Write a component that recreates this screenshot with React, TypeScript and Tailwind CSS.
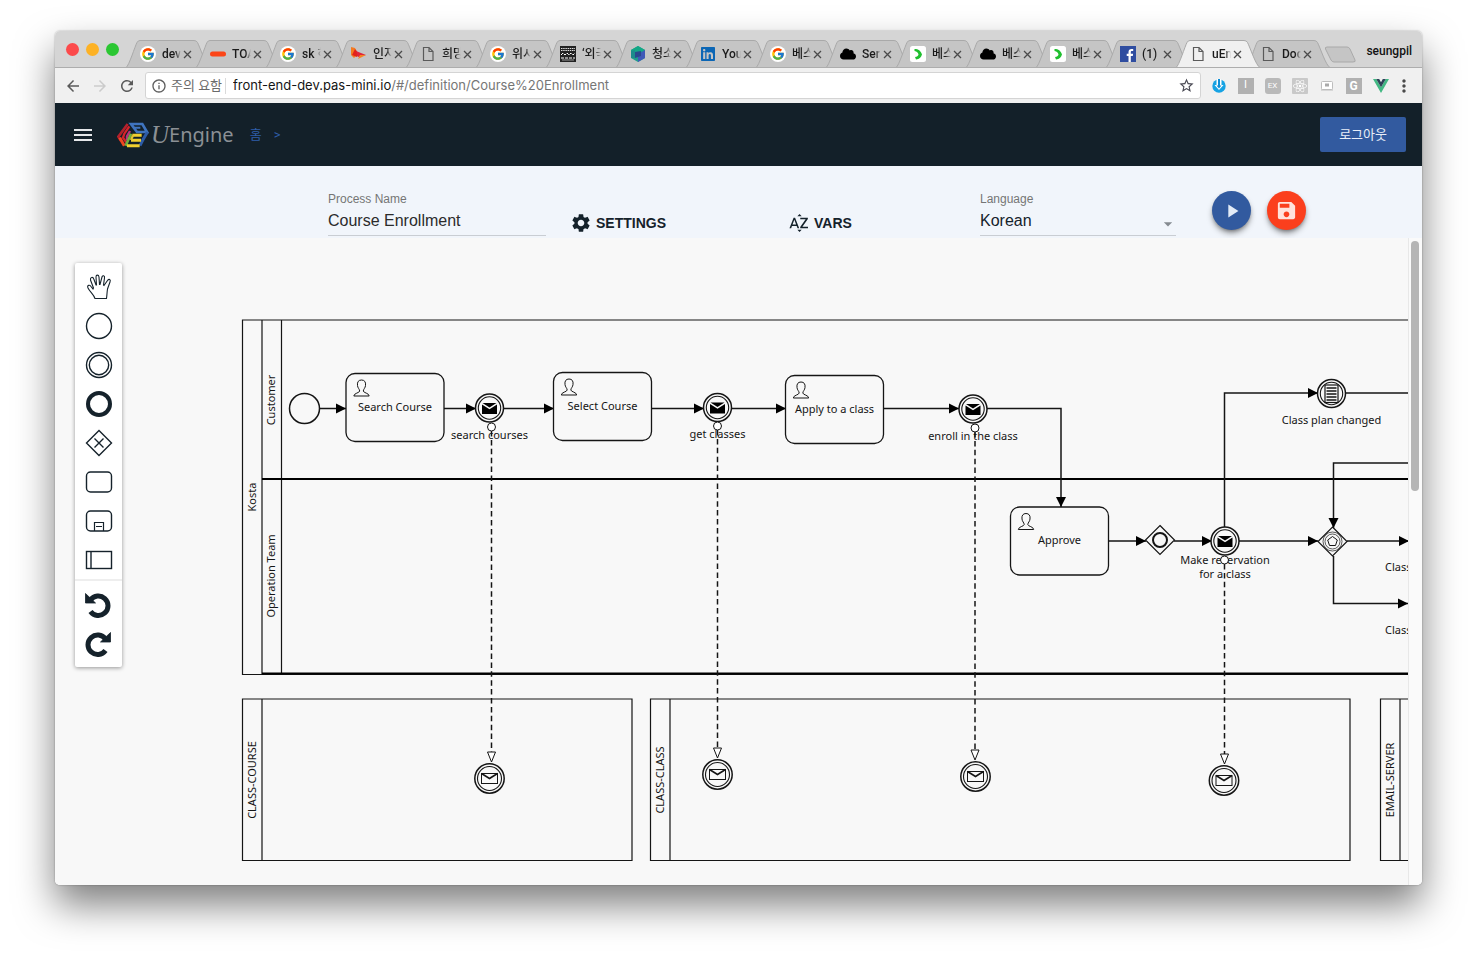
import type { ReactNode } from 'react';
import { FcGoogle } from 'react-icons/fc';
import { FaCloud, FaReact, FaLinkedin } from 'react-icons/fa';
import {
  MdArrowBack,
  MdArrowForward,
  MdArrowDropDown,
  MdInfoOutline,
  MdMenu,
  MdMoreVert,
  MdPlayArrow,
  MdRefresh,
  MdSave,
  MdSettings,
  MdSortByAlpha,
  MdStarBorder,
} from 'react-icons/md';

/* ---------- Browser chrome ---------- */

const GoogleIcon = () => (
  <span className="flex size-4 items-center justify-center rounded-full bg-white">
    <FcGoogle size={14} />
  </span>
);

const PageIcon = () => (
  <svg width="16" height="16" viewBox="0 0 16 16" fill="none" stroke="#5a5a5a" strokeWidth="1.2">
    <path d="M3.500 1.500h5.500l4 4v9H3.500z M9 1.500v4h4" />
  </svg>
);

const ToastIcon = () => (
  <svg width="16" height="16" viewBox="0 0 16 16">
    <rect x="0" y="5.500" width="16" height="5" rx="2.500" fill="#fb4517" />
  </svg>
);

const WingIcon = () => (
  <svg width="17" height="16" viewBox="0 0 17 16">
    <path d="M1 1l4 1 3 6-4 4-3-3z" fill="#f47a20" />
    <path d="M5 3l4 5-2 3-5-2z" fill="#e2231a" />
    <path d="M6 5l10 4-8 2z" fill="#e0253a" />
    <path d="M10 9l6 0-8 4z" fill="#f58220" />
  </svg>
);

const FilmIcon = () => (
  <svg width="16" height="16" viewBox="0 0 16 16">
    <rect width="16" height="16" fill="#222" />
    <path d="M1 2.500h14M1 4.500h14" stroke="#ddd" strokeDasharray="1.500 0.700" />
    <path d="M1 9l2-2 2 2 2-2 2 2 2-2 2 2 2-2M1 12h14" stroke="#fff" strokeDasharray="3 1" fill="none" />
    <path d="M2 14h12" stroke="#999" />
  </svg>
);

const CubeIcon = () => (
  <svg width="16" height="16" viewBox="0 0 16 16">
    <path d="M8 0l7 4v8l-7 4-7-4V4z" fill="#1f9d8b" />
    <path d="M8 0l7 4v4L8 5 1 8V4z" fill="#13a886" />
    <path d="M8 16l7-4V4L8 8z" fill="#4059b8" />
    <path d="M1 5l4-1v8l-4 0z" fill="#1c8c8c" />
    <path d="M5 6l6-1v5l-6 2z" fill="#2a4a8d" />
  </svg>
);

const GreenArrowIcon = () => (
  <svg width="16" height="16" viewBox="0 0 16 16">
    <rect width="16" height="16" rx="2.500" fill="#fff" />
    <path d="M4.500 3c4 0 6 1.500 7.500 5.500-1 3-2.500 4.500-6 5L5 11c2 0 3-1 3.500-2.500C8 6.500 7 5.500 4.500 5z" fill="#1fbf2f" />
  </svg>
);

const FacebookIcon = () => (
  <svg width="16" height="16" viewBox="0 0 16 16">
    <rect width="16" height="16" fill="#2f4da0" />
    <path d="M8.500 16v-6H6.700V7.700h1.800V6c0-2 1.200-3.100 3-3.100.8 0 1.500.1 1.700.1v2.100H12c-1 0-1.200.5-1.200 1.200v1.400h2.300l-.3 2.300h-2V16z" fill="#fff" />
  </svg>
);

const CloudIcon = () => <FaCloud size={16} color="#000" />;
const LinkedinIcon = () => <FaLinkedin size={16} color="#0b66b5" />;

type Tab = { title: string; icon: ReactNode; active?: boolean };

const tabs: Tab[] = [
  { title: 'dev', icon: <GoogleIcon /> },
  { title: 'TOA', icon: <ToastIcon /> },
  { title: 'sk 하', icon: <GoogleIcon /> },
  { title: '인지', icon: <WingIcon /> },
  { title: '희망', icon: <PageIcon /> },
  { title: '위시', icon: <GoogleIcon /> },
  { title: '‘외국', icon: <FilmIcon /> },
  { title: '청소', icon: <CubeIcon /> },
  { title: 'You', icon: <LinkedinIcon /> },
  { title: '베스', icon: <GoogleIcon /> },
  { title: 'Ser', icon: <CloudIcon /> },
  { title: '베스', icon: <GreenArrowIcon /> },
  { title: '베스', icon: <CloudIcon /> },
  { title: '베스', icon: <GreenArrowIcon /> },
  { title: '(1)', icon: <FacebookIcon /> },
  { title: 'uEn', icon: <PageIcon />, active: true },
  { title: 'Doc', icon: <PageIcon /> },
];

function BrowserTab({ title, icon, active }: Tab) {
  return (
    <div className={active ? 'relative z-10 -mr-[14px] h-7 w-[84px] shrink-0' : 'relative -mr-[14px] h-7 w-[84px] shrink-0'}>
      <svg className="absolute inset-0" width="84" height="28" viewBox="0 0 84 28">
        <path
          d="M0 27.500C3 26 9 6 11 2.500Q12 .5 14 .5H68Q70.500 .5 71.500 2.500C74 7 80 26 84 27.500"
          fill={active ? '#f0f0f0' : '#c5c5c5'}
          stroke="#a9a9a9"
        />
        {active && <path d="M1 27.500h82" stroke="#f0f0f0" />}
      </svg>
      <div className="relative flex h-full items-center pl-[14px]">
        {icon}
        <button
          type="button"
          className="ml-[6px] w-[19px] overflow-hidden text-left text-[12px] font-medium whitespace-nowrap text-[#1b1b1b] [mask-image:linear-gradient(to_right,black_70%,transparent)]"
        >
          {title}
        </button>
        <button type="button" aria-label="Close tab" className="ml-[2px]">
          <svg width="9" height="9" viewBox="0 0 9 9" stroke="#4a4a4a" strokeWidth="1.300">
            <path d="M1 1l7 7M8 1l-7 7" />
          </svg>
        </button>
      </div>
    </div>
  );
}

function TabStrip() {
  return (
    <div className="flex h-[37px] items-end overflow-hidden border-b border-[#adadad] bg-[#d5d5d5]">
      <div className="flex h-full w-[71px] shrink-0 items-center gap-[7px] pl-[11px]">
        <span className="size-[13px] rounded-full bg-[#fc4a4b]" />
        <span className="size-[13px] rounded-full bg-[#fdb225]" />
        <span className="size-[13px] rounded-full bg-[#2bc732]" />
      </div>
      <div className="-mb-px flex">
        {tabs.map((tab, i) => (
          <BrowserTab key={i} {...tab} />
        ))}
      </div>
      <button type="button" aria-label="New tab" className="ml-2 self-center">
        <svg width="34" height="18" viewBox="0 0 34 18" className="mt-3">
          <path d="M3 1h20q2 0 3 2l5 11q1 2-2 2H10q-2 0-3-2L1.500 3q-.7-2 1.500-2z" fill="#c5c5c5" stroke="#a9a9a9" />
        </svg>
      </button>
      <span className="ml-auto pr-[10px] pb-[7px] text-[12px] font-medium text-[#111]">seungpil</span>
    </div>
  );
}

const extensions: { name: string; icon: ReactNode }[] = [
  {
    name: 'Downloads',
    icon: (
      <svg width="14" height="14" viewBox="0 0 14 14">
        <circle cx="7" cy="7" r="6.700" fill="#16a3e4" />
        <path d="M4.500 0h5v6h2L7 11 2.500 6h2z" fill="#fff" />
        <path d="M6 0h2v6.500H9.500L7 9.500 4.500 6.500H6z" fill="#0f8fd6" />
      </svg>
    ),
  },
  { name: 'Instapaper', icon: <span className="flex size-4 items-center justify-center bg-[#b1b1b1] text-[11px] text-white">I</span> },
  { name: 'EX', icon: <span className="flex size-4 items-center justify-center rounded-[3px] bg-[#b9b9b9] text-[8px] text-white">EX</span> },
  { name: 'React', icon: <span className="flex size-4 items-center justify-center rounded-[1px] bg-[#c9c9c9] text-white"><FaReact size={14} /></span> },
  {
    name: 'Screen',
    icon: (
      <svg width="14" height="12" viewBox="0 0 14 12">
        <rect x="1.500" y="1.500" width="11" height="8" rx="1" fill="#fff" stroke="#bdbdbd" />
        <rect x="5" y="3.500" width="4" height="3" fill="#aaa" />
        <path d="M1 10h12" stroke="#bdbdbd" />
      </svg>
    ),
  },
  { name: 'G', icon: <span className="flex size-4 items-center justify-center bg-[#b1b1b1] text-[12px] font-bold text-white">G</span> },
  {
    name: 'Vue',
    icon: (
      <svg width="16" height="14" viewBox="0 0 16 14">
        <path d="M0 0h3.200L8 8.300 12.800 0H16L8 14z" fill="#42b883" />
        <path d="M3.200 0H6.200L8 3.200 9.800 0h3L8 8.300z" fill="#2f4358" />
      </svg>
    ),
  },
];

function AddressBar() {
  return (
    <div className="flex h-[35px] items-center bg-[#f0f0f0] pl-[9px]">
      <button type="button" aria-label="Back" className="w-[27px] text-[#5a5a5a]"><MdArrowBack size={18} /></button>
      <button type="button" aria-label="Forward" className="w-[27px] text-[#cbcbcb]"><MdArrowForward size={18} /></button>
      <button type="button" aria-label="Reload" className="w-[27px] text-[#5a5a5a]"><MdRefresh size={18} /></button>
      <div className="flex h-[27px] min-w-0 flex-1 items-center rounded-[3px] border border-[#d4d4d4] bg-white pr-[5px] pl-[5px]">
        <MdInfoOutline size={16} color="#5f5f5f" />
        <span className="ml-1 w-[54px] text-[13px] whitespace-nowrap text-[#6a6a6a]">주의 요함</span>
        <span className="mr-[7px] h-4 border-r border-[#dadada]" />
        <div role="textbox" aria-label="Address" className="min-w-0 flex-1 truncate font-['Inter',sans-serif] text-[13px] text-[#767676]">
          <span className="text-[#151515]">front-end-dev.pas-mini.io</span>/#/definition/Course%20Enrollment
        </div>
        <button type="button" aria-label="Bookmark" className="text-[#4b4b55]"><MdStarBorder size={17} /></button>
      </div>
      <div className="flex items-center pl-1">
        {extensions.map((ext) => (
          <button key={ext.name} type="button" aria-label={ext.name} className="flex h-5 w-[27px] items-center justify-center">
            {ext.icon}
          </button>
        ))}
        <button type="button" aria-label="Menu" className="mr-2 flex w-5 justify-center text-[#4a4a4a]"><MdMoreVert size={20} /></button>
      </div>
    </div>
  );
}

/* ---------- Application ---------- */

const Logo = () => (
  <svg width="32" height="26" viewBox="204 292 96 76" fill="none">
    <path d="M236 297L208 335l8 12" stroke="#b3202c" strokeWidth="8" />
    <path d="M212 338l14 24" stroke="#f0471f" strokeWidth="9" />
    <path d="M241 304l-15 22-4 12 10 14" stroke="#d8232a" strokeWidth="7" />
    <path d="M243 318l-9 16v12" stroke="#b8327e" strokeWidth="7" />
    <path d="M246 297h34l14 24h-30z" stroke="#3f74bf" strokeWidth="8" />
    <path d="M254 308h20" stroke="#3f74bf" strokeWidth="6" />
    <path d="M295 322l-14 24-8 16" stroke="#2c5ba6" strokeWidth="9" />
    <path d="M246 326l-16 36" stroke="#6fae3e" strokeWidth="8" />
    <path d="M250 331h28M246 346h30M234 362h38" stroke="#f0cf2f" strokeWidth="9" />
    <path d="M252 331l-6 14" stroke="#e3c52f" strokeWidth="7" />
  </svg>
);

function AppHeader() {
  return (
    <header className="flex h-[63px] items-center bg-[#132029] pr-4 pl-4">
      <button type="button" aria-label="Toggle menu" className="text-[#e6e8ea]"><MdMenu size={24} /></button>
      <a href="#/" aria-label="uEngine" className="ml-[22px] flex items-center text-[#8b9095]">
        <Logo />
        <span className="ml-[2px] font-['Liberation_Serif',serif] text-[25px] leading-7 italic">U</span>
        <span className="font-['Noto_Sans',sans-serif] text-[20px] leading-7">Engine</span>
      </a>
      <nav className="ml-4 flex gap-3 text-[13px] text-[#2f5ea8]">
        <a href="#/">홈</a>
        <span>&gt;</span>
      </nav>
      <button type="button" className="ml-auto h-[35px] rounded-[2px] bg-[#325a9f] px-[19px] text-[13px] text-[#e8eef8]">로그아웃</button>
    </header>
  );
}

function ProcessBar() {
  return (
    <div className="grid h-[72px] grid-cols-[273fr_218fr_242fr_192fr_196fr_246fr] bg-[#f1f5fb] pt-[25px] font-['Liberation_Sans',sans-serif]">
      <div className="col-start-2 flex flex-col">
        <label htmlFor="process-name" className="text-[12px] leading-4 text-[#757575]">Process Name</label>
        <input
          id="process-name"
          defaultValue="Course Enrollment"
          className="h-[29px] w-full border-b border-[#c9cdd3] bg-transparent text-[16px] text-[#2b2b2b] outline-none"
        />
      </div>
      <button type="button" className="mt-5 ml-6 flex h-6 items-center gap-1 text-[14px] font-bold text-[#15222b]">
        <MdSettings size={22} />
        SETTINGS
      </button>
      <button type="button" className="mt-5 flex h-6 items-center gap-1 text-[14px] font-bold text-[#15222b]">
        <MdSortByAlpha size={22} />
        VARS
      </button>
      <div className="relative flex flex-col">
        <label htmlFor="language" className="text-[12px] leading-4 text-[#757575]">Language</label>
        <select
          id="language"
          className="h-[29px] w-full appearance-none border-b border-[#c9cdd3] bg-transparent text-[16px] text-[#15222b] outline-none"
        >
          <option>Korean</option>
          <option>English</option>
        </select>
        <MdArrowDropDown size={20} color="#858a90" className="pointer-events-none absolute -right-0.5 bottom-1" />
      </div>
      <div className="flex items-start gap-4 pl-9">
        <button type="button" aria-label="Run" className="flex size-[39px] items-center justify-center rounded-full bg-[#325a9f] text-[#e3ebf7] shadow-md shadow-black/40">
          <MdPlayArrow size={22} />
        </button>
        <button type="button" aria-label="Save" className="flex size-[39px] items-center justify-center rounded-full bg-[#fb3f1d] text-[#ffe3dc] shadow-md shadow-black/40">
          <MdSave size={23} />
        </button>
      </div>
    </div>
  );
}

/* ---------- Palette ---------- */

const tools: { name: string; icon: ReactNode }[] = [
  {
    name: 'Hand',
    icon: (
      <path d="M-4 11.500C-5 8-9 5-11 1C-12.500-2-9-2.500-8-.5L-6 2L-5.500 1L-8.500-7C-9-10-6-10.500-5.200-8L-3-2L-2.500-2L-3-10C-3-12.500-.3-12.500 0-10L.5-2.500L1-2.500L3-10C3.500-12 6-11.500 5.500-9L4.500-2L5-1.500L8.500-6.500C10-8.500 12-7.500 11-5L8.500 2C8 5 8 8 7.500 11.500Z" strokeWidth="1.100" />
    ),
  },
  { name: 'Start event', icon: <circle r="12.500" /> },
  { name: 'Intermediate event', icon: <><circle r="12.500" /><circle r="9.700" /></> },
  { name: 'End event', icon: <circle r="11" strokeWidth="4" /> },
  { name: 'Gateway', icon: <path d="M0-12.500L12.500 0L0 12.500L-12.500 0ZM-4.500-4.500L4.500 4.500M4.500-4.500L-4.500 4.500" /> },
  { name: 'Task', icon: <rect x="-12.500" y="-10" width="25" height="20" rx="4" /> },
  { name: 'Subprocess', icon: <><rect x="-12.500" y="-10" width="25" height="20" rx="4" /><path d="M-4.500 10V1.500H4.500V10M-3 5.500H3" strokeWidth="1.200" /></> },
  { name: 'Pool', icon: <><rect x="-12.500" y="-8.500" width="25" height="17" /><path d="M-8-8.500V8.500" /></> },
];

const turnArrow = (
  <>
    <path d="M-8.500-5A9.700 9.700 0 1 1-8.500 6.500" strokeWidth="5" />
    <path d="M-13.500-11.500V-2H-3.500Z" fill="#15222b" strokeWidth="0.800" strokeLinejoin="round" />
  </>
);

const history: { name: string; icon: ReactNode }[] = [
  { name: 'Undo', icon: turnArrow },
  { name: 'Redo', icon: <g transform="translate(-2 0) scale(-1 1)">{turnArrow}</g> },
];

function ToolButton({ name, icon }: { name: string; icon: ReactNode }) {
  return (
    <button type="button" aria-label={name} className="flex h-[39px] w-full items-center justify-center">
      <svg width="30" height="30" viewBox="-15 -15 30 30" fill="none" stroke="#15222b" strokeWidth="1.400">
        {icon}
      </svg>
    </button>
  );
}

function Palette() {
  return (
    <div className="absolute top-[25px] left-5 w-[47px] rounded-[2px] bg-white shadow-[0_1px_4px_rgba(0,0,0,0.4)]">
      <div className="border-b-2 border-[#eeeeee] pt-1">
        {tools.map((t) => <ToolButton key={t.name} {...t} />)}
      </div>
      <div className="py-1">
        {history.map((t) => <ToolButton key={t.name} {...t} />)}
      </div>
    </div>
  );
}

/* ---------- Diagram ---------- */

const INK = '#151515';

function Task({ x, y, label }: { x: number; y: number; label: string }) {
  return (
    <g transform={`translate(${x} ${y})`}>
      <rect width="98" height="68" rx="9" fill="#f8f8f8" strokeWidth="1.300" />
      <path
        transform="translate(15.500 6.500)"
        d="M0 0C3 0 4.500 2 4 5.500C3.800 8 2 9 1.800 11C2 13 7.500 13 7.700 16L-7.700 16C-7.500 13-2 13-1.800 11C-2 9-3.800 8-4 5.500C-4.500 2-3 0 0 0Z"
        fill="none"
        strokeWidth="1"
      />
      <Label x={49} y={37}>{label}</Label>
    </g>
  );
}

function Label({ x, y, anchor = 'middle', children }: { x: number; y: number; anchor?: 'start' | 'middle'; children: ReactNode }) {
  return <text x={x} y={y} textAnchor={anchor} fill={INK} stroke="none">{children}</text>;
}

function SideLabel({ x, y, children }: { x: number; y: number; children: ReactNode }) {
  return (
    <text transform={`translate(${x + 4} ${y}) rotate(-90)`} textAnchor="middle" fill={INK} stroke="none">
      {children}
    </text>
  );
}

function ThrowMessage({ x, y }: { x: number; y: number }) {
  return (
    <g transform={`translate(${x} ${y})`}>
      <circle r="14" fill="#f8f8f8" strokeWidth="1.500" />
      <circle r="11.200" fill="none" strokeWidth="1.100" />
      <path d="M-7-5H7L0-.5Z M-7.500-3.500L0 1.200L7.500-3.500V6H-7.500Z" fill="#000" stroke="none" />
    </g>
  );
}

function CatchMessage({ x, y }: { x: number; y: number }) {
  return (
    <g transform={`translate(${x} ${y})`}>
      <circle r="14.700" fill="#f8f8f8" strokeWidth="1.500" />
      <circle r="12" fill="none" strokeWidth="1.100" />
      <rect x="-8" y="-5" width="16" height="10" fill="none" strokeWidth="1" />
      <path d="M-8-5L0 0L8-5" fill="none" strokeWidth="1.600" />
    </g>
  );
}

function Arrow({ points }: { points: [number, number][] }) {
  const [px, py] = points[points.length - 2];
  const [ex, ey] = points[points.length - 1];
  const angle = (Math.atan2(ey - py, ex - px) * 180) / Math.PI;
  return (
    <g>
      <polyline points={points.map((p) => p.join(',')).join(' ')} fill="none" strokeWidth="1.500" />
      <path transform={`translate(${ex} ${ey}) rotate(${angle})`} d="M0 0L-10-5V5Z" fill="#000" stroke="none" />
    </g>
  );
}

function MessageFlow({ x, from, to }: { x: number; from: number; to: number }) {
  return (
    <g>
      <path d={`M${x} ${from + 4}V${to - 10}`} strokeWidth="1.500" strokeDasharray="5.500 3.400" />
      <circle cx={x} cy={from} r="4" fill="#fff" strokeWidth="1" />
      <path d={`M${x - 4} ${to - 10}h8L${x} ${to}Z`} fill="#fff" strokeWidth="1" />
    </g>
  );
}

function Diagram() {
  return (
    <svg
      className="block h-[647px] w-full font-['Noto_Sans',sans-serif] text-[11px]"
      stroke={INK}
      fill="none"
      role="img"
      aria-label="Course Enrollment process"
    >
      <g transform="translate(-55 -238)">
        <path d="M1600 320H242.500V674.500H1600M262 320V674M281.500 320V674" strokeWidth="1.200" />
        <path d="M262 479H1600M262 673.500H1600" stroke="#000" strokeWidth="2" />
        <path d="M242.500 699H632V860.500H242.500ZM262 699V860.500" strokeWidth="1.200" />
        <path d="M650.500 699H1350V860.500H650.500ZM670 699V860.500" strokeWidth="1.200" />
        <path d="M1600 699H1380.500V860.500H1600M1400 699V860.500" strokeWidth="1.200" />

        <SideLabel x={252} y={497}>Kosta</SideLabel>
        <SideLabel x={271} y={400}>Customer</SideLabel>
        <SideLabel x={271} y={576}>Operation Team</SideLabel>
        <SideLabel x={252} y={780}>CLASS-COURSE</SideLabel>
        <SideLabel x={660} y={780}>CLASS-CLASS</SideLabel>
        <SideLabel x={1390} y={780}>EMAIL-SERVER</SideLabel>

        <Arrow points={[[320, 408.5], [346, 408.5]]} />
        <Arrow points={[[444, 408.5], [476, 408.5]]} />
        <Arrow points={[[503, 408.5], [554, 408.5]]} />
        <Arrow points={[[652, 408.5], [704, 408.5]]} />
        <Arrow points={[[731, 408.5], [786, 408.5]]} />
        <Arrow points={[[884, 408.5], [959, 408.5]]} />
        <Arrow points={[[987, 408.5], [1061, 408.5], [1061, 507]]} />
        <Arrow points={[[1109, 541], [1146, 541]]} />
        <Arrow points={[[1174, 541], [1212, 541]]} />
        <Arrow points={[[1239, 541], [1318, 541]]} />
        <Arrow points={[[1224.5, 527], [1224.5, 393], [1318, 393]]} />
        <Arrow points={[[1600, 463], [1333.5, 463], [1333.5, 528]]} />
        <Arrow points={[[1347, 541], [1409, 541]]} />
        <Arrow points={[[1333.5, 556], [1333.5, 603.5], [1408, 603.5]]} />
        <path d="M1345 393H1600" strokeWidth="1.500" />

        <circle cx="304.500" cy="408.500" r="15" strokeWidth="1.500" fill="#f8f8f8" />
        <Task x={346} y={373.5} label="Search Course" />
        <Task x={553.5} y={372.5} label="Select Course" />
        <Task x={785.5} y={375.5} label="Apply to a class" />
        <Task x={1010.5} y={507} label="Approve" />

        <ThrowMessage x={489.5} y={408} />
        <ThrowMessage x={717.5} y={407.5} />
        <ThrowMessage x={973} y={409} />
        <ThrowMessage x={1225} y={541} />

        <g transform="translate(1331.500 393.500)">
          <circle r="14" fill="#f8f8f8" strokeWidth="1.500" />
          <circle r="11.200" strokeWidth="1.100" />
          <rect x="-6.500" y="-8.500" width="13" height="17.500" strokeWidth="1.200" />
          <path d="M-5-5.500H5M-5-2.500H5M-5 .5H5M-5 3.500H5M-5 6.500H5" strokeWidth="1.400" />
        </g>

        <g transform="translate(1160 540)">
          <path d="M0-14.500L14.500 0L0 14.500L-14.500 0Z" fill="#f8f8f8" strokeWidth="1.200" />
          <circle r="7" strokeWidth="2" />
        </g>
        <g transform="translate(1332.500 541.500)">
          <path d="M0-14.500L14.500 0L0 14.500L-14.500 0Z" fill="#f8f8f8" strokeWidth="1.200" />
          <circle r="9.500" strokeWidth="0.700" />
          <circle r="7.500" strokeWidth="0.700" />
          <path d="M0-5L4.800-1.500L3 4H-3L-4.800-1.500Z" strokeWidth="1" />
        </g>

        <Label x={489.5} y={439}>search courses</Label>
        <Label x={717.5} y={438}>get classes</Label>
        <Label x={973} y={440}>enroll in the class</Label>
        <Label x={1225} y={564}>Make reservation</Label>
        <Label x={1225} y={578}>for a class</Label>
        <Label x={1331.5} y={424}>Class plan changed</Label>
        <Label x={1385} y={571} anchor="start">Class</Label>
        <Label x={1385} y={634} anchor="start">Class</Label>

        <MessageFlow x={491.5} from={427} to={762} />
        <MessageFlow x={717.5} from={426} to={758} />
        <MessageFlow x={975} from={428} to={760} />
        <MessageFlow x={1224.5} from={560} to={764} />

        <CatchMessage x={489.5} y={778.5} />
        <CatchMessage x={717.5} y={774.5} />
        <CatchMessage x={975.5} y={776.5} />
        <CatchMessage x={1224} y={780.5} />
      </g>
    </svg>
  );
}

export default function App() {
  return (
    <div className="min-h-screen bg-white px-[55px] pt-[31px] pb-[79px] font-['Roboto','Noto_Sans_CJK_KR',sans-serif]">
      <div className="rounded-[5px] shadow-[0_20px_38px_rgba(0,0,0,0.5),0_0_2px_rgba(0,0,0,0.35)]">
        <div className="overflow-hidden rounded-[5px] bg-[#f7f7f7]">
          <TabStrip />
          <AddressBar />
          <AppHeader />
          <ProcessBar />
          <main className="relative flex">
            <div className="min-w-0 flex-1 overflow-hidden bg-[#f8f8f8]">
              <Diagram />
            </div>
            <div className="w-[14px] shrink-0 border-l border-[#e8e8e8] bg-[#fafafa] pt-[3px] pl-[2px]">
              <div className="h-[250px] w-2 rounded-full bg-[#b5b5b5]" />
            </div>
            <Palette />
          </main>
        </div>
      </div>
    </div>
  );
}
